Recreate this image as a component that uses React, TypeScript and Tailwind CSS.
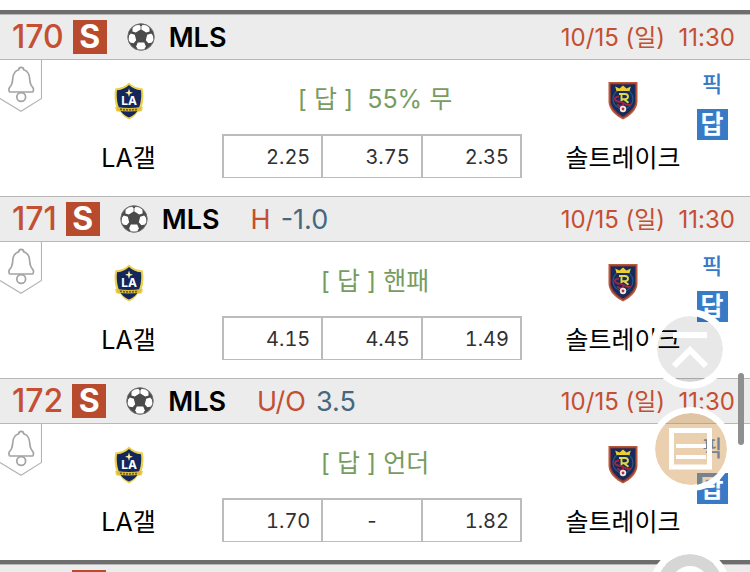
import React from "react";

type Match = {
  id: number;
  kind?: string;
  line?: string;
  pick: string;
  odds: string[];
};

const matches: Match[] = [
  { id: 170, pick: "[ 답 ]\u00a0 55% 무", odds: ["2.25", "3.75", "2.35"] },
  { id: 171, kind: "H", line: "-1.0", pick: "[ 답 ] 핸패", odds: ["4.15", "4.45", "1.49"] },
  { id: 172, kind: "U/O", line: "3.5", pick: "[ 답 ] 언더", odds: ["1.70", "-", "1.82"] },
];

function Ball() {
  return (
    <svg viewBox="0 0 28 28" className="ml-5 size-7 shrink-0" aria-hidden="true">
      <circle cx="14" cy="14" r="13.4" fill="#4b4b4b" />
      <g fill="#fff">
        <path d="M5.600 4.800 8.500 2.300 12.600 2l1 1.400v3l-4.800 3.200-3.400-1.200z" />
        <path d="m22.400 4.800-2.900-2.500L15.400 2l-1 1.400v3l4.800 3.200 3.400-1.200z" />
        <path d="m2.200 12.400 1.600-1.800 4 1.200 1.400 5.400-2.600 3-3.600-.8-1.600-3z" />
        <path d="m25.800 12.400-1.600-1.800-4 1.200-1.400 5.400 2.600 3 3.600-.8 1.600-3z" />
        <path d="M10.800 19.600h6.400l1.600 3.600-1.600 3.200q-3.200.8-6.400 0l-1.600-3.200z" />
      </g>
      <circle cx="14" cy="14" r="13.2" fill="none" stroke="#777" strokeWidth=".8" />
    </svg>
  );
}

function GalaxyCrest() {
  return (
    <svg viewBox="0 0 30 38" className="h-[38px] w-[30px]" role="img" aria-label="LA갤">
      <path d="M15 0.5C18 4 23 6 28.8 6.5 30 13 29.5 19 27.8 25H29l-1.2 4.2-4.2.8C21 34 18 36 15 37.5 12 36 9 34 6.4 30l-4.2-.8L1 25h1.2C.5 19 0 13 1.2 6.5 7 6 12 4 15 .5z" fill="#ecd24a" />
      <path d="M15 3c3 2.800 7 4.800 12 5.300.9 7.700-.5 16.400-4.200 21.400C20.500 32.500 18 34.200 15 35.600 12 34.200 9.500 32.500 7.200 29.700 3.500 24.700 2.100 16 3 8.300 8 7.800 12 5.800 15 3z" fill="#14275c" />
      <path d="m15 6.500 1 3.200 3 1.100-3 1-1 3.200-1-3.200-3-1 3-1.100z" fill="#fff0a4" />
      <text x="15" y="23" textAnchor="middle" fill="#fff" fontFamily="Inter, sans-serif" fontWeight="700" fontSize="12">LA</text>
      <path d="M3 25q12 2 24 0v3.500q-12 2-24 0z" fill="#dfbd3d" />
      <path d="M6 27.200q9 1.500 18 0" fill="none" stroke="#6a6133" strokeWidth="1.800" strokeDasharray="2 1" />
    </svg>
  );
}

function SaltLakeCrest() {
  return (
    <svg viewBox="0 0 30 39" className="h-[39px] w-[30px]" role="img" aria-label="솔트레이크">
      <path d="M.5 1h29v20C29 29 22 35 15 38.500 8 35 1 29 .5 21z" fill="#b9583a" />
      <path d="M2 2.500h26V21C27.500 28 21 33.500 15 36.700 9 33.500 2.500 28 2 21z" fill="#803738" />
      <path d="M3 3.500h24V21C26.500 27 20 32.500 15 35.300 10 32.500 3.500 27 3 21z" fill="#152b5b" />
      <circle cx="15" cy="18" r="10" fill="none" stroke="#315482" strokeWidth="1.200" />
      <path d="m8.500 10-1.300-4.500 4.300 2L15 4.500l3.500 3 4.300-2L21.500 10z" fill="#edce32" />
      <path d="M11 13h6q3 0 3 2.600T17 18.200h-3M13.500 13v7M16 18.200l4.500 3.500" fill="none" stroke="#e1d84a" strokeWidth="1.900" />
      <path d="M11 15.500q-4.500.5-4 2.800t5 2.500 3 3.200-6-.5M16 22q2.500 3 7 1.500" fill="none" stroke="#a62443" strokeWidth="1.800" />
      <circle cx="15" cy="28" r="3.200" fill="#f5e8dd" />
      <path d="m15 26.300 1.500 1.200-.6 1.800h-1.800l-.6-1.800z" fill="#a83545" />
    </svg>
  );
}

function BellTab() {
  return (
    <button type="button" aria-label="알림" className="block">
      <svg viewBox="0 0 42 52" className="h-[52px] w-[42px]" fill="none" stroke="#b3b3b3">
        <path d="M41.500 0v38.500L21 51.300 0 38.500" strokeWidth="1.100" />
        <g stroke="#a3a3a3" strokeWidth="1.700">
          <path d="M18.800 9.700a2.400 2.400 0 0 1 4.800 0c4.200 1.200 5.900 4.400 6.100 9.300.2 4.500.8 6.200 3.200 8.600 1 1 .6 4.400-.4 4.400H9.900c-1 0-1.400-3.400-.4-4.400 2.400-2.400 3-4.100 3.200-8.600.2-4.900 1.900-8.100 6.100-9.300z" />
          <circle cx="21.200" cy="37" r="4.400" />
        </g>
      </svg>
    </button>
  );
}

function SingleBadge() {
  return (
    <span className="ml-[9px] flex size-[34px] items-center justify-center bg-[#b84a2d] text-[32px] font-bold leading-none text-white">
      S
    </span>
  );
}

function MatchHeader({ match }: { match: Match }) {
  return (
    <header className="flex h-[46px] items-center border-y border-[#b8b8b8] bg-[#ececec] pl-3 pr-[15px] whitespace-nowrap">
      <span className="text-[32px] font-medium leading-none text-[#c44f31]">{match.id}</span>
      <SingleBadge />
      <Ball />
      <h2 className="ml-[14px] text-[27px] font-semibold leading-none text-black">MLS</h2>
      {match.kind && (
        <p className="ml-[31px] flex gap-[10px] text-[27px] leading-none">
          <span className="text-[#c44f31]">{match.kind}</span>
          <span className="text-[#456880]">{match.line}</span>
        </p>
      )}
      <time className="ml-auto pt-[2px] text-[24px] leading-none text-[#c44f31]">10/15 (일)&nbsp; 11:30</time>
    </header>
  );
}

function Team({ name, children }: { name: string; children: React.ReactNode }) {
  return (
    <div className="flex flex-col items-center pt-[21px]">
      <div className="flex h-[39px] items-center">{children}</div>
      <p className="mt-[22px] whitespace-nowrap text-[25px] leading-8 text-black">{name}</p>
    </div>
  );
}

function MatchRow({ match }: { match: Match }) {
  return (
    <article>
      <MatchHeader match={match} />
      <div className="grid h-[136px] grid-cols-[42px_9fr_300px_8fr_68px]">
        <div>
          <BellTab />
        </div>
        <div className="pr-[7px]">
          <Team name="LA갤">
            <GalaxyCrest />
          </Team>
        </div>
        <div className="flex flex-col">
          <p className="flex h-[74px] items-center justify-center whitespace-pre pt-[3px] pl-[6px] text-[25px] leading-8 text-[#779c60]">
            {match.pick}
          </p>
          <table className="h-11 w-full table-fixed border-collapse border-2 border-b border-[#bcbcbc] text-[20px] leading-6 tabular-nums text-[#303030]" aria-label={`${match.id} 배당`}>
            <tbody>
              <tr>
                {match.odds.map((odd, i) => (
                  <td key={i} className={odd === "-" ? "border-x-2 border-[#bcbcbc] text-center" : "border-x-2 border-[#bcbcbc] pr-[11px] text-right"}>
                    {odd}
                  </td>
                ))}
              </tr>
            </tbody>
          </table>
        </div>
        <div className="pl-[42px]">
          <Team name="솔트레이크">
            <SaltLakeCrest />
          </Team>
        </div>
        <div className="flex flex-col items-center pr-2 pt-2">
          <button type="button" className="h-8 text-[22px] font-medium leading-8 text-[#377ac6]">픽</button>
          <button type="button" className="mt-[9px] flex size-[31px] items-center justify-center bg-[#377ac6] text-[25px] font-bold leading-none text-white">답</button>
        </div>
      </div>
    </article>
  );
}

export default function App() {
  return (
    <main className="relative h-screen overflow-hidden bg-white pt-[10px] font-['Inter','Noto_Sans_CJK_KR',sans-serif]">
      <section className="border-y-4 border-[#6e6e6e]">
        {matches.map((m) => (
          <MatchRow key={m.id} match={m} />
        ))}
      </section>
      <MatchHeader match={{ id: 173, pick: "", odds: [] }} />

      <button type="button" aria-label="맨 위로" className="absolute right-5 top-[309px] size-20 rounded-full border-[7px] border-white bg-black/9 bg-clip-padding">
        <svg viewBox="0 0 66 66" className="size-full" fill="none" stroke="#fff" strokeWidth="6">
          <path d="M16 19h34M17 50l16-16 16 16" />
        </svg>
      </button>
      <button type="button" aria-label="목록" className="absolute right-[17px] top-[407px] size-[84px] rounded-full border-[6px] border-white bg-[#cf8f40]/42 bg-clip-padding">
        <svg viewBox="0 0 72 72" className="size-full" fill="none" stroke="#fff" strokeWidth="5">
          <path d="M16.500 17.500h38v36.500h-38z" />
          <path d="M21 33h30M21 44h30" strokeWidth="4" />
        </svg>
      </button>
      <button type="button" aria-label="더 보기" className="absolute right-5 top-[547px] size-20 rounded-full border-[7px] border-white bg-[#d6d6d6] bg-clip-padding">
        <svg viewBox="0 0 66 66" className="size-full">
          <circle cx="33" cy="31" r="19" fill="#fff" />
        </svg>
      </button>
      <div className="absolute right-[6px] top-[373px] h-[72px] w-[6px] rounded-full bg-[#8f8f8f]" />
    </main>
  );
}
